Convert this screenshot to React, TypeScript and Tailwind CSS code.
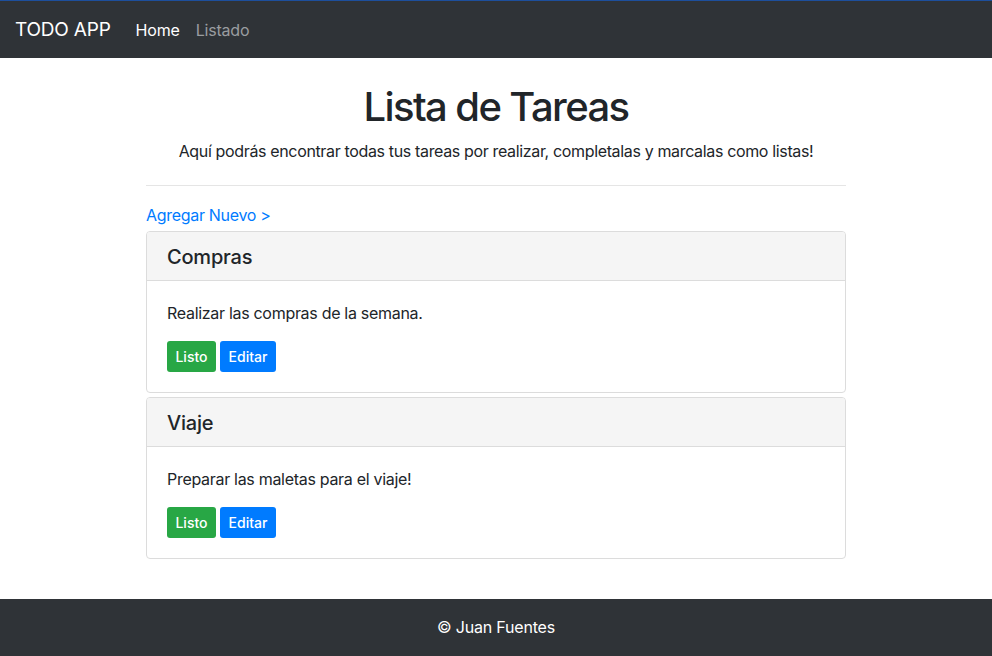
import React from "react";

const tasks = [
  { title: "Compras", body: "Realizar las compras de la semana." },
  { title: "Viaje", body: "Preparar las maletas para el viaje!" },
];

export default function App() {
  return (
    <div
      className="min-h-[656px] flex flex-col bg-white text-[#212529]"
      style={{ fontFamily: "Inter, 'Noto Sans', sans-serif" }}
    >
      <nav className="h-[58px] bg-[#2f3337] border-t border-[#1d4f9c] flex items-center pl-[15px]">
        <span className="text-white text-[19px] tracking-[-0.2px] mr-[25px] leading-[30px]">TODO APP</span>
        <a className="text-white text-[16px] tracking-[-0.2px] pr-4">Home</a>
        <a className="text-[#9a9da0] text-[16px] tracking-[-0.2px]">Listado</a>
      </nav>

      <main className="w-[700px] mx-auto flex-1">
        <div className="text-center">
          <h1 className="text-[40px] leading-[48px] font-medium tracking-[-1.6px] mt-[25px] mb-2">
            Lista de Tareas
          </h1>
          <p className="text-[16px] leading-6 mb-4 tracking-[-0.35px]">
            Aquí podrás encontrar todas tus tareas por realizar, completalas y marcalas como listas!
          </p>
        </div>
        <hr className="border-t border-[#e5e5e5] mt-[22px] mb-[17px]" />
        <a className="block text-[#007bff] text-[16px] leading-6 tracking-[-0.3px]">Agregar Nuevo &gt;</a>
        <div className="flex flex-col gap-[4px] mt-[4px]">
          {tasks.map((t) => (
            <div key={t.title} className="border border-[#dcdcdc] rounded-[4px] overflow-hidden">
              <div className="bg-[#f5f5f5] border-b border-[#dcdcdc] px-5 pt-[13px] pb-[11px]">
                <h5 className="text-[20px] leading-6 font-medium tracking-[-0.2px]">{t.title}</h5>
              </div>
              <div className="p-5">
                <p className="text-[16px] leading-6 mb-4 tracking-[-0.3px]">{t.body}</p>
                <div className="flex gap-[4px]">
                  <button className="bg-[#28a745] text-white text-[14px] font-medium leading-[21px] px-2 py-1 rounded-[3px] h-[31px] w-[49px]">
                    Listo
                  </button>
                  <button className="bg-[#007bff] text-white text-[14px] font-medium leading-[21px] px-2 py-1 rounded-[3px] h-[31px] w-[56px]">
                    Editar
                  </button>
                </div>
              </div>
            </div>
          ))}
        </div>
      </main>

      <footer className="h-[57px] bg-[#2f3337] mt-[40px] flex items-center justify-center">
        <span className="text-white text-[16px] tracking-[-0.2px] -mt-[2px]">© Juan Fuentes</span>
      </footer>
    </div>
  );
}
